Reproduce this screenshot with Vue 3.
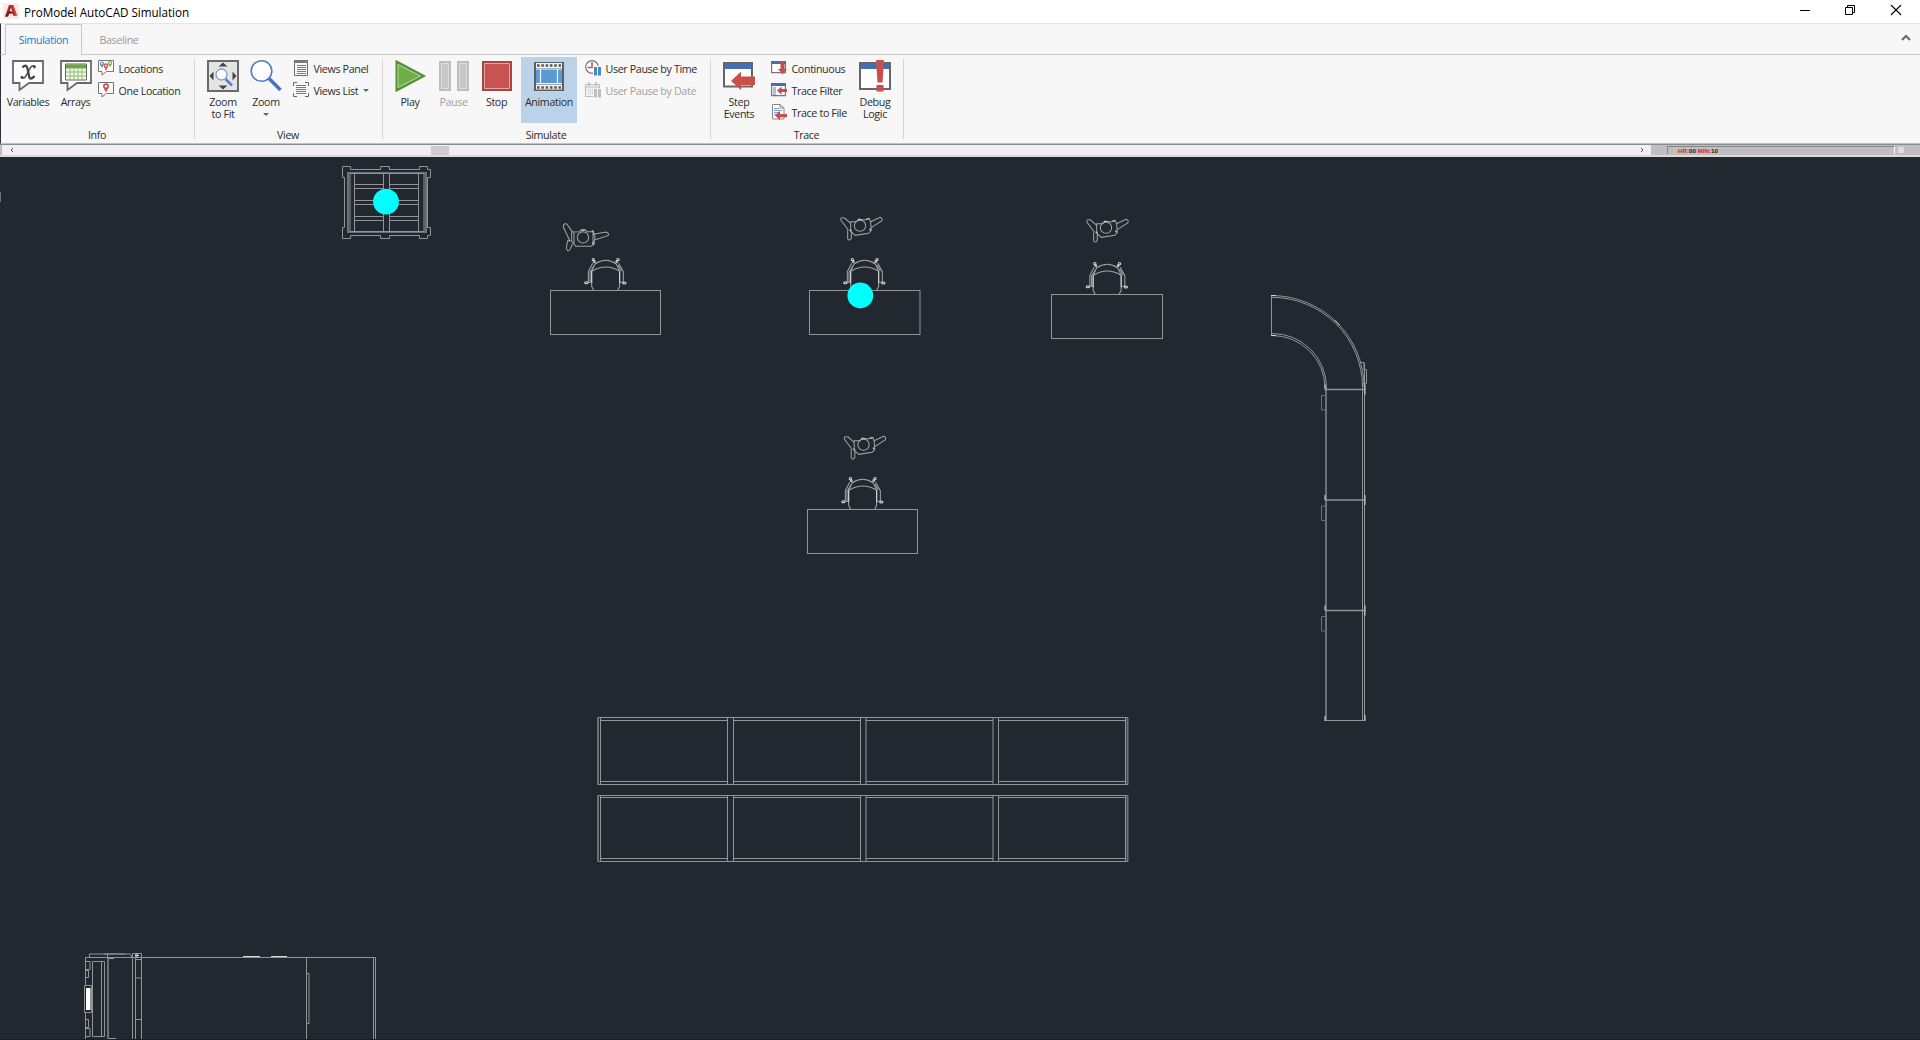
<script setup>
const desks = [
  { x: 550.5, y: 290.5, w: 110 },
  { x: 809.5, y: 290.5, w: 110.5 },
  { x: 1051.5, y: 294.5, w: 111 },
  { x: 807.5, y: 509.5, w: 110 },
]
const chairs = [[0, 0], [259, 0], [501.5, 4], [257, 219]]
const people = [[0, 0], [246, 2], [3.5, 219]]
const racks = [
  { top: 717.5, innerTop: 720.5, innerBottom: 781.5, bottom: 784.5 },
  { top: 795.5, innerTop: 797.5, innerBottom: 858.5, bottom: 861.5 },
]
const bays = [[600.5, 727.5], [733.5, 860.5], [866, 993], [998.5, 1125.5]]
const joints = [389.5, 500, 610.5]
</script>

<template>
  <div class="window">
    <header class="titlebar">
      <svg class="logo" width="16" height="16" viewBox="0 0 16 16">
        <rect width="16" height="16" fill="#fbe9e6" />
        <path d="M2 13.500L6 2h4.200L14 12.500l-3.400.6-.9-2.600H6l-.9 3z" fill="#b3262c" />
        <path d="M6.700 8.300L8 4.500l1.300 3.800z" fill="#fbe9e6" />
        <path d="M2 13.500L5.500 8l4.500 2.500-4 .1-.9 2.900z" fill="#7e151b" />
        <path d="M10.200 2L14 12.500l-1.500.3L9 2z" fill="#d9484a" />
      </svg>
      <span class="title">ProModel AutoCAD Simulation</span>
      <svg class="controls" width="112" height="20" viewBox="1796 0 112 20" fill="none" stroke="#000">
        <path d="M1800 10.500h10" />
        <path d="M1845.500 7.500h7v7h-7zM1847.500 7.500v-2h7v7h-2" />
        <path d="M1891 5l10 10M1901 5l-10 10" stroke-width="1.100" />
      </svg>
    </header>

    <nav class="tabs">
      <div class="tab active"><span>Simulation</span></div>
      <div class="tab idle"><span>Baseline</span></div>
      <svg class="collapse" width="12" height="10" viewBox="0 0 12 10"><path d="M2 7l4-4 4 4" fill="none" stroke="#666" stroke-width="2" /></svg>
    </nav>

    <section class="ribbon">
      <div class="group info">
        <div class="items">
          <div class="big variables">
            <svg width="34" height="34" viewBox="0 0 34 34">
              <path d="M2 2h30v22H18l-9.500 7v-7H2z" fill="#fff" stroke="#6a6a6a" stroke-width="1.800" />
              <path d="M11.500 8.500c3-3.500 4.500-2 5.200 2l1.200 6c.6 4 3 4 5.600 .500" fill="none" stroke="#454545" stroke-width="2.300" />
              <path d="M24 7.500c-3-2.200-5 1-7 5.500s-4 7.500-6.500 5.500" fill="none" stroke="#454545" stroke-width="1.400" />
              <circle cx="23.500" cy="8" r="1.400" fill="#454545" /><circle cx="11" cy="18.300" r="1.500" fill="#454545" />
            </svg>
            <span>Variables</span>
          </div>
          <div class="big arrays">
            <svg width="34" height="34" viewBox="0 0 34 34">
              <path d="M2 2h30v22H18l-9.500 7v-7H2z" fill="#fff" stroke="#6a6a6a" stroke-width="1.800" />
              <path d="M6.500 5h21v16h-21z" fill="#f1f7ed" stroke="#5e6b58" />
              <path d="M7 5.500h20v4H7z" fill="#6aa93f" />
              <path d="M11 10v11M15 10v11M19 10v11M23 10v11M7 13h20M7 17h20" stroke="#8cbd6c" />
            </svg>
            <span>Arrays</span>
          </div>
          <div class="small-list">
            <div class="small">
              <svg width="16" height="16" viewBox="0 0 16 16">
                <path d="M.5.500h15v11H8.500L4 15v-3.500H.5z" fill="#fff" stroke="#777" />
                <path d="M4 8L2 4.500a2.200 2.200 0 1 1 4 0z" fill="#6389c8" /><path d="M8 11L5.900 6.500a2.300 2.300 0 1 1 4.200 0z" fill="#d15b58" /><path d="M12 7l-2-3a2.200 2.200 0 1 1 4 0z" fill="#77ae50" />
                <g fill="#fff"><circle cx="4" cy="3.500" r=".9" /><circle cx="8" cy="5.700" r=".9" /><circle cx="12" cy="3" r=".9" /></g>
              </svg>
              <span>Locations</span>
            </div>
            <div class="small">
              <svg width="16" height="16" viewBox="0 0 16 16">
                <path d="M.5.500h15v11H8.500L4 15v-3.500H.5z" fill="#fff" stroke="#777" />
                <path d="M8 10.500L5.300 5.500a3 3 0 1 1 5.400 0z" fill="#cf504d" /><circle cx="8" cy="4.300" r="1.200" fill="#fff" />
              </svg>
              <span>One Location</span>
            </div>
          </div>
        </div>
        <div class="caption">Info</div>
      </div>

      <div class="group view">
        <div class="items">
          <div class="big fit">
            <svg width="34" height="34" viewBox="0 0 34 34">
              <path d="M2 2h30v30H2z" fill="#e4e4e4" stroke="#6a6a6a" stroke-width="2" />
              <path d="M17 3.500l4.500 4h-9zM17 30.500l4.500-4h-9zM3.500 17l4-4.500v9zM30.500 17l-4-4.500v9z" fill="#444" />
              <path d="M19.500 20l6.500 6.500" stroke="#5b82c6" stroke-width="2.600" /><circle cx="15.500" cy="15.500" r="5.500" fill="#fff" stroke="#7f9fd4" stroke-width="1.300" />
            </svg>
            <span>Zoom<br>to Fit</span>
          </div>
          <div class="big zoom">
            <svg width="34" height="34" viewBox="0 0 34 34">
              <path d="M20 19.500L31.500 31" stroke="#4673bd" stroke-width="3.600" /><circle cx="12.500" cy="12" r="10.300" fill="#fff" stroke="#527bc0" stroke-width="1.600" />
            </svg>
            <span>Zoom</span>
            <i class="caret"></i>
          </div>
          <div class="small-list">
            <div class="small">
              <svg width="16" height="16" viewBox="0 0 16 16">
                <path d="M1.500.500h13v15h-13z" fill="#f8faff" stroke="#6c6c6c" /><path d="M1 0h14v3H1z" fill="#777" /><path d="M12 1h2v1h-2z" fill="#dc6d68" />
                <path d="M4 5.500h9M4 7.500h9M4 9.500h9M4 11.500h9M4 13.500h9" stroke="#557fc5" />
              </svg>
              <span>Views Panel</span>
            </div>
            <div class="small">
              <svg width="16" height="16" viewBox="0 0 16 16">
                <path d="M.5 4V.500H4M12 .500h3.500V4M15.500 11v3.500H12M4 14.500H.500V11" fill="none" stroke="#666" />
                <path d="M3 3.500h10M3 5.500h10M3 7.500h10M3 9.500h10M3 11.500h10" stroke="#557fc5" />
              </svg>
              <span>Views List</span><i class="caret"></i>
            </div>
          </div>
        </div>
        <div class="caption">View</div>
      </div>

      <div class="group simulate">
        <div class="items">
          <div class="big play">
            <svg width="34" height="34" viewBox="0 0 34 34">
              <path d="M3.500 2.500v29L31 17z" fill="#70ad47" stroke="#548f35" stroke-width="2" /><path d="M5 5.500v23L27.500 17z" fill="none" stroke="#b7d6a2" />
            </svg>
            <span>Play</span>
          </div>
          <div class="big pause disabled">
            <svg width="34" height="34" viewBox="0 0 34 34">
              <path d="M3 3h10v28H3zM21 3h10v28H21z" fill="#c7c7c7" stroke="#bdbdbd" stroke-width="2" /><path d="M4.500 4.500h7v25h-7zM22.500 4.500h7v25h-7z" fill="none" stroke="#dedede" />
            </svg>
            <span>Pause</span>
          </div>
          <div class="big stop">
            <svg width="34" height="34" viewBox="0 0 34 34">
              <path d="M3 3h28v28H3z" fill="#c75450" stroke="#a94442" stroke-width="2" /><path d="M4.500 4.500h25v25h-25z" fill="none" stroke="#e3a7a5" />
            </svg>
            <span>Stop</span>
          </div>
          <div class="big animation">
            <svg width="34" height="34" viewBox="0 0 34 34">
              <path d="M2 3h30v29H2z" fill="#5e5e5e" /><path d="M4 9.500h26v15H4z" fill="#5a9ad5" />
              <path d="M4 6.500h26M4 28h26" stroke="#f3f3f3" stroke-width="5" />
              <path d="M5 6.500h24M5 28.500h24" stroke="#5a5a5a" stroke-width="2.600" stroke-dasharray="2.600 1.700" />
              <path d="M8.500 10v14M25.500 10v14M4 10h26M4 24.500h26" stroke="#f3f3f3" stroke-width="1.200" />
            </svg>
            <span>Animation</span>
          </div>
          <div class="small-list">
            <div class="small">
              <svg width="16" height="16" viewBox="0 0 16 16">
                <circle cx="7" cy="7" r="6.300" fill="#fff" stroke="#777" stroke-width="1.200" /><path d="M7 2v5.500H2.500" fill="none" stroke="#d4524f" stroke-width="1.500" />
                <path d="M8 6h8v10H8z" fill="#f7f7f7" /><path d="M9 7h3v8.500H9zM13 7h3v8.500h-3z" fill="#4787c4" />
              </svg>
              <span>User Pause by Time</span>
            </div>
            <div class="small disabled">
              <svg width="16" height="16" viewBox="0 0 16 16">
                <path d="M.5 2.500h14v12H.500zM.5 5h14" fill="#f1f1f1" stroke="#bdbdbd" /><path d="M4 0v4M11 0v4" stroke="#bdbdbd" stroke-width="1.500" />
                <path d="M3 7.500h6M3 9.500h6M3 11.500h6" stroke="#c2c2c2" stroke-dasharray="1 1" /><path d="M8 6h8v10H8z" fill="#f7f7f7" /><path d="M9 7h3v8.500H9zM13 7h3v8.500h-3z" fill="#bdbdbd" />
              </svg>
              <span>User Pause by Date</span>
            </div>
          </div>
        </div>
        <div class="caption">Simulate</div>
      </div>

      <div class="group trace">
        <div class="items">
          <div class="big step">
            <svg width="34" height="34" viewBox="0 0 34 34">
              <path d="M2 4h28v23.500H2z" fill="#fff" stroke="#666" stroke-width="2" /><path d="M3 4.500h26V10H3z" fill="#456fb5" />
              <path d="M9 22l10-9.500v5h14v8.500H19v5z" fill="#c94f4c" />
            </svg>
            <span>Step<br>Events</span>
          </div>
          <div class="small-list">
            <div class="small">
              <svg width="16" height="16" viewBox="0 0 16 16"><path d="M.6 1.600h13.800v11H.6z" fill="#fff" stroke="#777" stroke-width="1.200" /><path d="M0 1h15v3H0z" fill="#456fb5" /><path d="M9.500 2h4v7H16l-4.500 5.500L7 9h2.500z" fill="#c94f4c" /></svg>
              <span>Continuous</span>
            </div>
            <div class="small">
              <svg width="16" height="16" viewBox="0 0 16 16"><path d="M.6 1.600h13.800v12H.6z" fill="#fff" stroke="#777" stroke-width="1.200" /><path d="M0 1h15v3H0z" fill="#456fb5" /><path d="M2 6h3M2 8h3M2 10h3M2 12h3" stroke="#557fc5" /><path d="M6 8.500l4.500-4v2.600H16v3h-5.500v2.700z" fill="#c94f4c" /></svg>
              <span>Trace Filter</span>
            </div>
            <div class="small">
              <svg width="16" height="16" viewBox="0 0 16 16"><path d="M1.500.500H9L13 4v11H1.500z" fill="#fff" stroke="#888" /><path d="M9 .500V4h4" fill="none" stroke="#888" /><path d="M3 4.500h5M3 6.500h8M3 8.500h5M3 10.500h3" stroke="#7f9fd4" /><path d="M4 11.500l5-4.500v3h7v3.200H9v3z" fill="#c94f4c" /></svg>
              <span>Trace to File</span>
            </div>
          </div>
          <div class="big debug">
            <svg width="34" height="34" viewBox="0 0 34 34">
              <path d="M2 4h30v26H2z" fill="#fff" stroke="#666" stroke-width="2" /><path d="M3 4.500h28V10H3z" fill="#456fb5" />
              <path d="M18 1h8l-1.500 22.500h-5zM18.500 26h7v6.500h-7z" fill="#c94f4c" />
            </svg>
            <span>Debug<br>Logic</span>
          </div>
        </div>
        <div class="caption">Trace</div>
      </div>
    </section>

    <div class="timebar">
      <div class="scrollbar">
        <svg width="6" height="8" viewBox="0 0 6 8"><path d="M4 2L2 4l2 2" fill="none" stroke="#555" /></svg>
        <div class="thumb"></div>
        <svg class="right" width="6" height="8" viewBox="0 0 6 8"><path d="M2 2l2 2-2 2" fill="none" stroke="#555" /></svg>
      </div>
      <div class="clock"><span><b>HR:</b>00 <b>MIN:</b>10</span></div>
      <div class="grip"></div>
    </div>

    <svg class="drawing" width="1920" height="883" viewBox="0 157 1920 883">
      <defs>
        <g id="chair" class="symbol" transform="translate(540 210) scale(.33333)">
          <path d="M161 241l-6-12V184l10-22q32-22 64 0l10 22v45l-6 12M157 183q40-24 81 0" />
          <path d="M155 184v36M239 184v36" class="bright" />
          <path d="M158 160l-13 25v32h10M236 160l14 25v32h-10M150 217V187l12-20M244 183l-10-18" />
          <g class="bright"><circle cx="160" cy="149" r="3.500" /><circle cx="163" cy="155" r="2.500" /><circle cx="234" cy="149" r="3.500" /><circle cx="230" cy="155" r="2.500" /><ellipse cx="139" cy="218" rx="5" ry="3" /><ellipse cx="253" cy="219" rx="5" ry="3" /></g>
        </g>
        <g id="person" class="symbol" transform="translate(800 205) scale(.33333)">
          <path d="M152 55L134 39q-15-4-11 7l22 29M143 76v25q6 9 11-1V76M152 50h18l6-8 18 3 14-5 4 12 2 24-8 9-40 6-14-12zM212 50l28-13q10 3 5 11l-30 19M152 55v25" />
          <circle cx="180" cy="62" r="17" />
          <path d="M174 44h10M199 42h8M148 76h6M208 71l5 5" class="bright" />
        </g>
      </defs>
      <g class="lines">
        <path d="M342.500 166.500h8v3h30v-3h9v3h30v-3h8v3h3v8h-3v50h3v8h-3v3h-8v-3h-30v3h-9v-3h-30v3h-8v-11h2v-50h-2z" />
        <path d="M348 173h78v59h-78z" stroke-width="2" class="dim" />
        <path d="M350 173.500h74v58h-74zM354.500 173v59M418.500 173v59M383.500 173v59M389.500 173v59" />
        <path d="M354 184.500h29M354 188.500h29M354 200.500h29M354 204.500h29M354 216.500h29M354 220.500h29M390 184.500h28M390 188.500h28M390 200.500h28M390 204.500h28M390 216.500h28M390 220.500h28" />

        <rect v-for="(d, i) in desks" :key="'d' + i" :x="d.x" :y="d.y" :width="d.w" height="44" />
        <use v-for="(c, i) in chairs" :key="'c' + i" href="#chair" :x="c[0]" :y="c[1]" />
        <use v-for="(p, i) in people" :key="'p' + i" href="#person" :x="p[0]" :y="p[1]" />
        <g class="symbol" transform="translate(540 210) scale(.33333)">
          <path d="M97 65L80 42q-11-3-10 9l20 43M83 91l-4 24q5 14 12 2l6-15M95 66l24-1 5-6h12l5 6h19l5 14-3 24-10 6h-45l-12-15zM160 73l38-7q11 4 6 11l-38 12M102 66v36M159 65v38" />
          <circle cx="129" cy="82" r="17" />
          <path d="M124 61h10M155 63h7M85 92h6M156 98l5 4" class="bright" />
        </g>

        <path d="M1271.500 336v-40.500A93 91.500 0 0 1 1364 387M1271.500 297.300A91 90 0 0 1 1362.500 387M1271.500 333.500A54 54 0 0 1 1326.500 388M1271.500 335.500A53 53 0 0 1 1325 388" />
        <path d="M1271 295.500h5M1271 335.500h5M1334.500 320l5 5" class="bright" />
        <path d="M1361 362.500h3v7M1363.500 369.500h3v14h-4" />
        <path d="M1326 388v333" stroke-width="2" class="dim" /><path d="M1362.500 384v337M1364.500 363v358" />
        <path d="M1325 720.500h40" />
        <g v-for="y in joints" :key="y">
          <path :d="`M1325 ${y}h40`" stroke-width="1.600" />
          <path :d="`M1365 ${y - 5}v10M1325 ${y - 5}v5`" class="bright" />
          <path :d="`M1325 ${y + 6}h-3.500v14.500h3.500`" class="dim" />
        </g>
        <path d="M1365 715v6M1325 716v5" class="bright" />

        <g v-for="r in racks" :key="r.top">
          <path :d="`M598 ${r.top}H1128M598 ${r.bottom}H1128`" />
          <path :d="`M598 ${r.top}V${r.bottom}M1127.500 ${r.top}V${r.bottom}`" class="dim" stroke-width="2" />
          <g v-for="b in bays" :key="b[0]">
            <path :d="`M${b[0]} ${r.top}V${r.bottom}M${b[1]} ${r.top}V${r.bottom}M${b[0]} ${r.innerTop}H${b[1]}M${b[0]} ${r.innerBottom}H${b[1]}`" />
          </g>
        </g>

        <path d="M85.500 985v-27.500h290V1040M373.500 957v83M306.500 957v83M307 973.500h2v50h-2" />
        <path d="M89.500 957v-3h41l1 3M104 954h21M107.500 954v4M132.500 958v-4.500h9V1040M135.500 954v86M132.500 958v82M135 959.500h6M135 978h6M135 1019.500h6" />
        <path d="M108 1040v-82" class="dim" stroke-width="2" />
        <path d="M92.500 961.500h12v75h-12zM101.500 961v75M86 961.500h4v8h-4M86 970.500h2.500v7H86M86 1019.500h2.500v8H86M86 1028.500h4v8h-4M85.500 1013v27M108 958.500h6M109 1038.500h7" />
        <path d="M84.500 985.500h7v27h-7z" /><path d="M86 988h4.500v22H86z" class="white" />
        <path d="M243 956.500h17M271 956.500h16M135 955.500h4M137 953v5" class="bright" />
      </g>
      <circle cx="386" cy="201.700" r="12.900" fill="#0ff" /><circle cx="860.300" cy="295.500" r="12.900" fill="#0ff" />
      <path d="M0 192h1v10H0z" fill="#69717a" />
      <path d="M0 1039.500h1920" stroke="#1b2028" />
    </svg>
  </div>
</template>

<style>
body { overflow: hidden; background: #212830; }
</style>
<style scoped>
.window { width: 1920px; height: 1040px; display: flex; flex-direction: column; font-family: "Open Sans", "Noto Sans", sans-serif; font-size: 10.700px; letter-spacing: -.36px; line-height: 12px; color: #2c2c2c; overflow: hidden; }
.titlebar { height: 23px; flex: none; display: flex; background: #fff; box-sizing: border-box; padding-left: 3px; color: #000; }
.logo { margin-top: 3px; }
.title { margin: 6px 0 0 5px; font-size: 11.700px; letter-spacing: -.04px; white-space: nowrap; }
.controls { margin-left: auto; margin-right: 12px; }
.tabs { height: 32px; flex: none; display: flex; background: #f7f7f7; border-top: 1px solid #e4e4e4; border-bottom: 1px solid #c8c8c8; border-left: 1px solid #2c323b; box-sizing: border-box; padding-left: 4px; }
.tab { height: 31px; box-sizing: border-box; display: flex; justify-content: center; padding-top: 10px; }
.active { width: 77px; border: 1px solid #c8c8c8; border-bottom: 0; background: #f7f7f7; color: #1979ca; padding-top: 9px; }
.idle { width: 74px; color: #999; }
.collapse { margin: 9px 8px 0 auto; }
.ribbon { height: 89px; flex: none; display: flex; background: #f7f7f7; border-left: 1px solid #2c323b; border-bottom: 1px solid #c2c2c2; box-sizing: border-box; }
.group { height: 80px; margin-top: 4px; border-right: 1px solid #d5d5d5; display: flex; flex-direction: column; box-sizing: border-box; }
.info { width: 194px; } .view { width: 188px; } .simulate { width: 328px; } .trace { width: 193px; }
.items { display: flex; height: 70px; flex: none; }
.caption { text-align: center; height: 12px; flex: none; padding-right: 1px; }
.big { display: flex; flex-direction: column; align-items: center; flex: none; text-align: center; white-space: nowrap; height: 66px; margin-top: -2px; padding-top: 2px; box-sizing: border-box; }
.big span { margin-top: 3px; }
.variables { width: 48px; margin-left: 3px; }
.arrays { width: 47px; }
.fit { width: 46px; margin-left: 5px; } .zoom { width: 40px; }
.play { width: 44px; margin-left: 5px; } .pause { width: 43px; } .stop { width: 43px; }
.animation { width: 56px; margin-left: 3px; background: #bbd3e8; }
.step { width: 48px; margin-left: 4px; } .debug { width: 48px; margin-left: 4px; }
.small-list { display: flex; flex-direction: column; gap: 6px; padding-top: 1px; flex: none; }
.small { display: flex; align-items: center; height: 16px; gap: 4.500px; white-space: nowrap; }
.small svg { flex: none; }
.small span { position: relative; top: .6px; }
.info .small-list { width: 92px; margin-left: -1px; } .view .small-list { margin-left: 7px; }
.simulate .small-list { margin-left: 8px; } .trace .small-list { margin-left: 8px; width: 76px; }
.disabled { color: #a0a0a0; }
.caret { width: 0; height: 0; border: 3px solid transparent; border-top-color: #666; border-bottom: 0; }
.zoom .caret { margin-top: 5px; }
.timebar { height: 13px; flex: none; display: flex; align-items: center; background: #bfbfbf; border-top: 1px solid #8c8c8c; border-bottom: 2px solid #d9ddda; box-sizing: border-box; padding-left: 2px; letter-spacing: 0; }
.scrollbar { width: 1649px; height: 10px; background: #f0f0f0; display: flex; align-items: center; box-sizing: border-box; padding: 0 6px 0 7px; }
.thumb { width: 18px; height: 9px; background: #cdcdcd; margin-left: 416px; }
.right { margin-left: auto; }
.clock { width: 228px; height: 8px; margin-left: 16px; box-sizing: border-box; border-top: 1px solid #858585; border-left: 1px solid #858585; border-right: 1px solid #fff; padding-left: 10px; font: bold 6.200px/7px "Liberation Sans", sans-serif; color: #222; }
.clock span { display: block; white-space: pre; }
.clock b { color: #f01818; }
.grip { width: 6px; height: 6px; background: #ddd; margin-left: 3px; }
.drawing { display: block; flex: none; background: #212830; }
.lines { fill: none; stroke: #8f9499; stroke-width: 1; }
.lines .dim { stroke: #6b7178; }
.symbol { stroke-width: 3.100; stroke: #a0a4a8; }
.bright { stroke: #d6d9dc; }
.lines .white { fill: #fff; stroke: none; }
</style>
